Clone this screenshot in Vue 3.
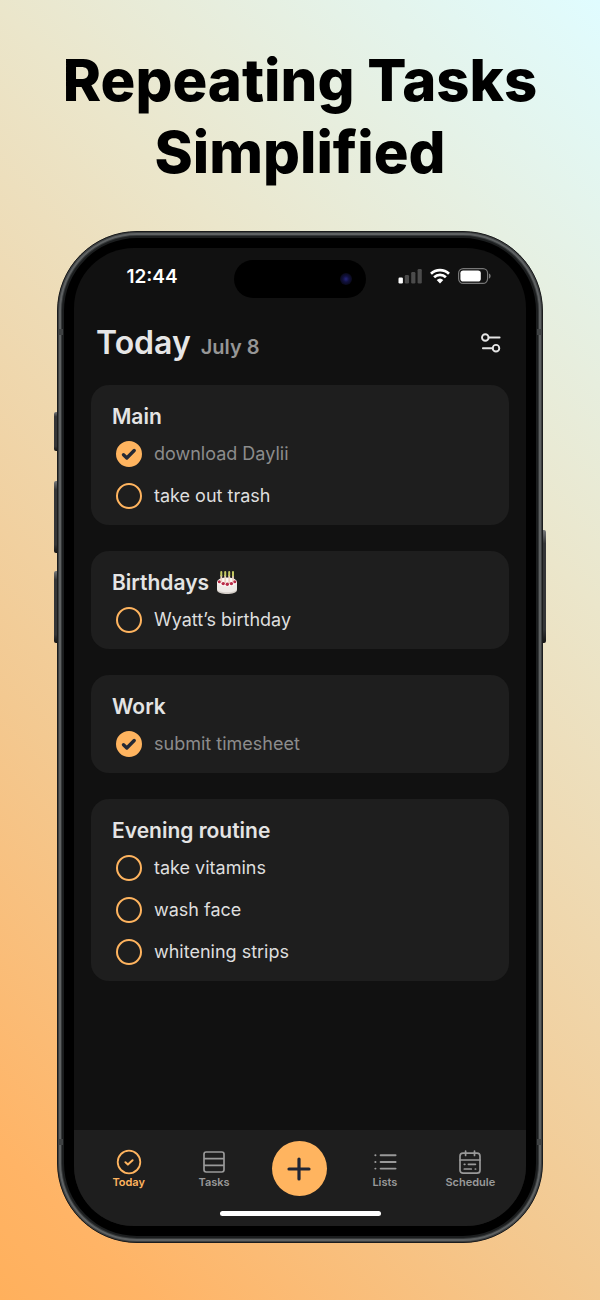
<template>
  <div class="poster">
    <h1>Repeating Tasks<br />Simplified</h1>

    <div class="phone">
      <span class="key action"></span>
      <span class="key vol-up"></span>
      <span class="key vol-down"></span>
      <span class="key power"></span>
      <span class="band band-left"></span>
      <span class="band band-right"></span>
      <span class="band band-left low"></span>
      <span class="band band-right low"></span>

      <div class="screen">
        <div class="status">
          <span class="clock">12:44</span>
          <span class="island"><i class="lens"></i></span>
          <span class="signals">
            <svg width="24" height="16" viewBox="0 0 24 16">
              <rect x="0.5" y="9.5" width="4.4" height="6" rx="1.2" fill="#fff" />
              <rect x="6.8" y="7" width="4.2" height="8.5" rx="1.2" fill="#4b4b4b" />
              <rect x="13.2" y="4" width="4.2" height="11.5" rx="1.2" fill="#4b4b4b" />
              <rect x="19.6" y="1" width="4.2" height="14.5" rx="1.2" fill="#4b4b4b" />
            </svg>
            <svg width="20" height="16" viewBox="0 0 20 16" fill="none" stroke="#fff" stroke-width="2.7">
              <path d="M1 5.7a13 13 0 0 1 18 0" />
              <path d="M4.1 9.3a8.6 8.6 0 0 1 11.8 0" />
              <path d="M6.7 12a4.8 4.8 0 0 1 6.6 0L10 15.4z" fill="#fff" stroke="none" />
            </svg>
            <svg width="33" height="16" viewBox="0 0 33 16">
              <rect x="0.6" y="0.6" width="29" height="14.8" rx="4.6" fill="none" stroke="#777" stroke-width="1.2" />
              <rect x="2.4" y="2.4" width="20.4" height="11.2" rx="2.8" fill="#fff" />
              <path d="M31 5.4c2.2.8 2.2 4.4 0 5.2z" fill="#777" />
            </svg>
          </span>
        </div>

        <header class="top">
          <h2>Today</h2>
          <span class="date">July 8</span>
          <button class="filter" aria-label="Filter">
            <svg width="20" height="20" viewBox="0 0 20 20" fill="none" stroke="#e4e4e4" stroke-width="1.9" stroke-linecap="round">
              <circle cx="4.3" cy="4.5" r="3.3" />
              <path d="M7.6 4.5h11" />
              <circle cx="15" cy="15.2" r="3.3" />
              <path d="M1.9 15.2h9.8" />
            </svg>
          </button>
        </header>

        <main class="lists">
          <section v-for="list in lists" :key="list.title" class="card">
            <h3>
              {{ list.title }}
              <svg v-if="list.cake" width="24" height="24" viewBox="0 0 24 24" role="img" aria-label="cake">
                <path d="M2 11v8c0 5.4 20 5.4 20 0v-8z" fill="#d3cdc7" />
                <path d="M2 11v6.4c0 5.2 20 5.2 20 0V11z" fill="#efebe7" />
                <ellipse cx="12" cy="11" rx="10" ry="4.6" fill="#fbf8f5" />
                <path d="M6.3 4v7M10.2 4v8M14.2 4v8M18 4v7" stroke="#eed3c4" stroke-width="1.8" />
                <g fill="#b92c48">
                  <circle cx="4.3" cy="10.8" r="1.5" />
                  <circle cx="8.2" cy="12.6" r="1.7" />
                  <circle cx="12.3" cy="13.2" r="1.7" />
                  <circle cx="16.4" cy="12.6" r="1.7" />
                  <circle cx="19.8" cy="10.8" r="1.5" />
                </g>
                <path d="M6.3 1v3.4M10.2 1v3.4M14.2 1v3.4M18 1v3.4" stroke="#c5c964" stroke-width="2" stroke-linecap="round" />
              </svg>
            </h3>
            <label v-for="task in list.tasks" :key="task.name" class="task" :class="{ done: task.done }">
              <span class="tick">
                <input type="checkbox" v-model="task.done" />
                <svg v-if="task.done" width="26" height="26" viewBox="0 0 26 26" fill="none" stroke="#242935" stroke-width="3.4" stroke-linecap="round" stroke-linejoin="round">
                  <path d="M7.5 13.8l3.3 3.2 7.4-7.5" />
                </svg>
              </span>
              <span class="name">{{ task.name }}</span>
            </label>
          </section>
        </main>

        <nav class="tabs">
          <a href="#today" class="tab active">
            <svg width="26" height="26" viewBox="0 0 26 26" fill="none" stroke="currentColor" stroke-width="1.8" stroke-linecap="round" stroke-linejoin="round">
              <circle cx="13" cy="13" r="11.3" />
              <path d="M9.4 13.3l2.5 2.3 4.7-4.4" stroke-width="2" />
            </svg>
            Today
          </a>
          <a href="#tasks" class="tab">
            <svg width="26" height="26" viewBox="0 0 26 26" fill="none" stroke="currentColor" stroke-width="1.7">
              <rect x="3" y="3" width="20" height="20" rx="2.2" />
              <path d="M3 9.6h20M3 16.3h20" />
            </svg>
            Tasks
          </a>
          <button class="add" aria-label="Add task">
            <svg width="28" height="28" viewBox="0 0 28 28" stroke="#202534" stroke-width="3.2" stroke-linecap="round">
              <path d="M14 4v20M4 14h20" />
            </svg>
          </button>
          <a href="#lists" class="tab">
            <svg width="26" height="26" viewBox="0 0 26 26" fill="none" stroke="currentColor" stroke-width="1.9" stroke-linecap="round">
              <path d="M8.6 6.3h15M8.6 13h15M8.6 19.6h15" />
              <path d="M3.3 6.3h.2M3.3 13h.2M3.3 19.6h.2" />
            </svg>
            Lists
          </a>
          <a href="#schedule" class="tab">
            <svg width="26" height="26" viewBox="0 0 26 26" fill="none" stroke="currentColor" stroke-width="1.7" stroke-linecap="round">
              <rect x="3" y="4.2" width="20" height="20" rx="3" />
              <path d="M3 11h20M8.6 2v4.4M17.5 2v4.4" />
              <path d="M7.3 15.3h.6M11.4 15.3h7M7.3 20h7M18.3 20h.3" />
            </svg>
            Schedule
          </a>
        </nav>
        <div class="home"><i></i></div>
      </div>
    </div>
  </div>
</template>

<script setup>
import { ref } from 'vue'

const lists = ref([
  {
    title: 'Main',
    tasks: [
      { name: 'download Daylii', done: true },
      { name: 'take out trash', done: false }
    ]
  },
  {
    title: 'Birthdays',
    cake: true,
    tasks: [{ name: 'Wyatt’s birthday', done: false }]
  },
  {
    title: 'Work',
    tasks: [{ name: 'submit timesheet', done: true }]
  },
  {
    title: 'Evening routine',
    tasks: [
      { name: 'take vitamins', done: false },
      { name: 'wash face', done: false },
      { name: 'whitening strips', done: false }
    ]
  }
])
</script>

<style>
body { margin: 0; }
</style>

<style scoped>
.poster {
  box-sizing: border-box;
  min-height: 100vh;
  padding: 44px 57px 57px;
  display: flex;
  flex-direction: column;
  gap: 43px;
  font-family: Inter, "Liberation Sans", sans-serif;
  background: linear-gradient(45deg, #ffb05c 0%, #ffb466 8%, #f3c991 32%, #ebe6cb 68%, #e0fcff 100%);
}
h1, h2, h3 { margin: 0; }
h1 {
  font-size: 58px;
  line-height: 72px;
  font-weight: 800;
  text-align: center;
  white-space: nowrap;
  color: #000;
}

/* phone body */
.phone {
  position: relative;
  flex: 1;
  display: flex;
  padding: 11px;
  border: 1px solid #1b1c1d;
  border-radius: 80px;
  background: #000;
  box-shadow: inset 0 0 0 1px #3c3f40, inset 0 0 0 3px #5e6162, inset 0 0 0 4px #353839, inset 0 0 0 6px #1b1d1e;
}
.key {
  position: absolute;
  left: -4px;
  width: 3px;
  border-radius: 2px 0 0 2px;
  background: linear-gradient(#77797a, #343537 12%, #343537 88%, #141414);
}
.action { top: 180px; height: 39px; }
.vol-up { top: 249px; height: 72px; }
.vol-down { top: 339px; height: 72px; }
.power {
  top: 298px;
  left: auto;
  right: -4px;
  height: 113px;
  border-radius: 0 2px 2px 0;
}
.band {
  position: absolute;
  top: 97px;
  width: 5px;
  height: 6px;
  background: #3f4243;
}
.band-left { left: 0; }
.band-right { right: 0; }
.band.low { top: auto; bottom: 97px; }

.screen {
  flex: 1;
  margin: 5px;
  display: flex;
  flex-direction: column;
  border-radius: 60px;
  overflow: hidden;
  background: #111;
}

.status {
  display: grid;
  grid-template-columns: 1fr 132px 1fr;
  align-items: center;
  padding-top: 12px;
}
.clock {
  padding: 0 4px 6px 0;
  text-align: center;
  font-size: 19px;
  font-weight: 600;
  color: #fff;
}
.island {
  height: 38px;
  border-radius: 19px;
  background: #000;
  display: flex;
  align-items: center;
  justify-content: flex-end;
}
.lens {
  width: 12px;
  height: 12px;
  margin-right: 14px;
  border-radius: 50%;
  background: radial-gradient(circle, #25257c 0%, #11113f 35%, #080816 75%);
}
.signals {
  display: flex;
  justify-content: center;
  align-items: center;
  gap: 8px;
  padding: 0 4px 6px 0;
}

.top {
  display: flex;
  align-items: baseline;
  gap: 10px;
  padding: 22px 25px 19px 22px;
}
.top h2 {
  font-size: 32px;
  line-height: 46px;
  font-weight: 600;
  color: #e6e6e6;
}
.date {
  font-size: 20px;
  font-weight: 600;
  color: #969696;
}
.filter {
  margin-left: auto;
  align-self: center;
  width: 20px;
  height: 20px;
  padding: 0;
  border: none;
  background: none;
  cursor: pointer;
}
.filter svg { display: block; }

.lists {
  flex: 1;
  display: flex;
  flex-direction: column;
  gap: 26px;
  padding: 0 17px 26px;
}
.card {
  padding: 19px 21px 8px;
  border-radius: 18px;
  background: #1e1e1e;
}
.card h3 {
  display: flex;
  align-items: center;
  gap: 6px;
  margin-bottom: 3px;
  font-size: 21px;
  line-height: 26px;
  font-weight: 600;
  color: #e4e4e4;
}
.task {
  display: flex;
  align-items: center;
  gap: 12px;
  height: 42px;
  padding-left: 4px;
  font-size: 18px;
  color: #dedede;
  cursor: pointer;
}
.name { padding-bottom: 2px; }
.task.done { color: #8c8c8c; }
.tick {
  display: grid;
  width: 26px;
  height: 26px;
}
.tick > * { grid-area: 1 / 1; }
.tick svg { pointer-events: none; }
.tick input {
  appearance: none;
  box-sizing: border-box;
  width: 26px;
  height: 26px;
  margin: 0;
  border: 2px solid #ffb45f;
  border-radius: 50%;
  cursor: pointer;
}
.tick input:checked { background: #ffb45f; }

.tabs {
  display: grid;
  grid-template-columns: repeat(5, 1fr);
  justify-items: center;
  align-items: center;
  padding: 11px 13px 0 12px;
  background: #1e1e1e;
}
.tab {
  display: flex;
  flex-direction: column;
  align-items: center;
  font-size: 11px;
  line-height: 14px;
  font-weight: 600;
  text-decoration: none;
  color: #999;
}
.tab.active { color: #ffb45f; }
.add {
  display: flex;
  align-items: center;
  justify-content: center;
  width: 55px;
  height: 55px;
  padding: 0;
  border: none;
  border-radius: 50%;
  background: #ffb45f;
  cursor: pointer;
}
.home {
  display: flex;
  justify-content: center;
  padding: 15px 0 10px;
  background: #1e1e1e;
}
.home i {
  width: 161px;
  height: 5px;
  border-radius: 3px;
  background: #fff;
}
</style>
